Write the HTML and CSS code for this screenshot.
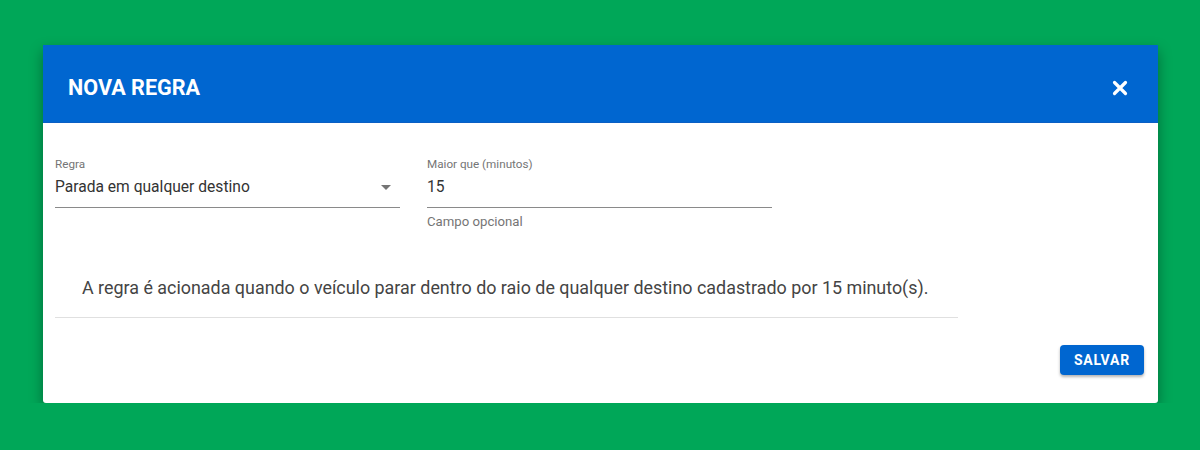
FILE: index.html
```html
<!DOCTYPE html>
<html>
<head>
    <meta charset="UTF-8">
    <title>Nova regra</title>
    <link rel="stylesheet" href="styles.css">
</head>
<body>
<div class="dialog">
    <div class="dialog-header">
        <h1>NOVA REGRA</h1>
        <button class="close" type="button">
            <svg width="16" height="16" viewBox="0 0 16 16">
                <path d="M2.5 2.5 L13.5 13.5 M13.5 2.5 L2.5 13.5" stroke="#fff" stroke-width="3.2" stroke-linecap="round"/>
            </svg>
        </button>
    </div>
    <div class="dialog-body">
        <div class="fields">
            <div class="field">
                <label>Regra</label>
                <div class="input select">
                    <span>Parada em qualquer destino</span>
                    <i class="arrow"></i>
                </div>
            </div>
            <div class="field">
                <label>Maior que (minutos)</label>
                <div class="input">
                    <span>15</span>
                </div>
                <small>Campo opcional</small>
            </div>
        </div>
        <p class="summary">A regra é acionada quando o veículo parar dentro do raio de qualquer destino cadastrado por 15 minuto(s).</p>
    </div>
    <div class="dialog-actions">
        <button class="btn" type="button">SALVAR</button>
    </div>
</div>
</body>
</html>
```

FILE: styles.css
```css
html, body {
    margin: 0;
    padding: 0;
}

body {
    background: #00a758;
    font-family: Roboto, "Liberation Sans", sans-serif;
    padding: 45px 42px 0 43px;
}

.dialog {
    background: #fff;
    height: 358px;
    border-radius: 0 0 3px 3px;
    box-shadow: 0 6px 14px rgba(0, 0, 0, 0.35);
    display: flex;
    flex-direction: column;
}

.dialog-header {
    box-sizing: border-box;
    height: 78px;
    padding: 7px 30px 0 25px;
    background: #0066d0;
    border-bottom: 1px solid #0a5fc4;
    display: flex;
    align-items: center;
    justify-content: space-between;
}

.dialog-header h1 {
    margin: 0;
    color: #fff;
    font-size: 21.6px;
    font-weight: 700;
}

.close {
    border: none;
    background: none;
    padding: 0;
    margin-top: 2px;
    width: 16px;
    height: 16px;
    display: flex;
}

.dialog-body {
    padding: 34px 12px 0 12px;
    flex: 1;
}

.fields {
    display: flex;
    gap: 27px;
}

.field {
    width: 345px;
    display: flex;
    flex-direction: column;
}

.field label {
    font-size: 11.7px;
    color: #757575;
    line-height: 14px;
}

.input {
    box-sizing: border-box;
    height: 37px;
    padding-top: 2px;
    border-bottom: 1px solid #8a8a8a;
    display: flex;
    align-items: flex-start;
    line-height: 28px;
    font-size: 15.6px;
    color: #333;
}

.select span {
    flex: 1;
}

.arrow {
    width: 0;
    height: 0;
    margin-top: 12px;
    margin-right: 9px;
    border-left: 5px solid transparent;
    border-right: 5px solid transparent;
    border-top: 5px solid #757575;
}

.field small {
    font-size: 13.2px;
    color: #757575;
    margin-top: 6px;
}

.summary {
    width: 876px;
    margin: 48px 0 0 0;
    padding: 0 0 19px 27px;
    font-size: 17.9px;
    color: #444;
    border-bottom: 1px solid #e0e0e0;
}

.dialog-actions {
    display: flex;
    justify-content: flex-end;
    padding: 0 14px 28px 0;
}

.btn {
    width: 84px;
    height: 30px;
    border: none;
    border-radius: 4px;
    background: #0066d0;
    color: #fff;
    font-family: Roboto, "Liberation Sans", sans-serif;
    font-size: 14px;
    font-weight: 700;
    letter-spacing: 0.8px;
    box-shadow: 0 2px 3px rgba(0, 0, 0, 0.3);
}
```
